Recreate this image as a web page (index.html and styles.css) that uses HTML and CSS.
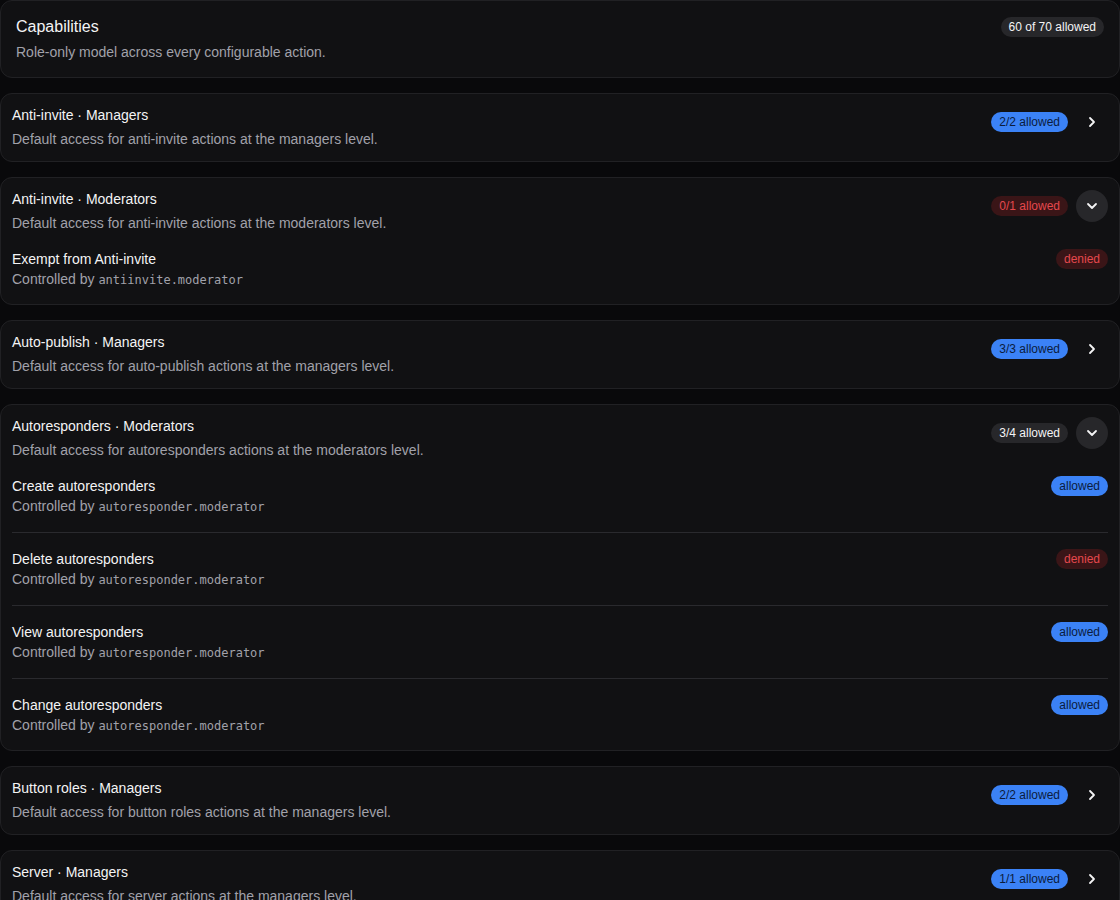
FILE: index.html
```html
<!DOCTYPE html>
<html lang="en">
<head>
<meta charset="utf-8">
<title>Capabilities</title>
<link rel="stylesheet" href="styles.css">
</head>
<body>
<main class="stack">
  <section class="card summary">
    <div class="summary-text">
      <h1 class="summary-title">Capabilities</h1>
      <p class="summary-sub">Role-only model across every configurable action.</p>
    </div>
    <span class="pill pill-neutral">60 of 70 allowed</span>
  </section>

  <section class="card">
    <div class="group-head">
      <div class="group-text">
        <div class="group-title">Anti-invite · Managers</div>
        <div class="group-desc">Default access for anti-invite actions at the managers level.</div>
      </div>
      <div class="group-side">
        <span class="pill pill-allowed">2/2 allowed</span>
        <button class="toggle" aria-label="Expand"><svg viewBox="0 0 16 16" width="16" height="16"><path d="M6 4l4 4-4 4" fill="none" stroke="#f4f4f5" stroke-width="1.8" stroke-linecap="round" stroke-linejoin="round"/></svg></button>
      </div>
    </div>
  </section>

  <section class="card open">
    <div class="group-head">
      <div class="group-text">
        <div class="group-title">Anti-invite · Moderators</div>
        <div class="group-desc">Default access for anti-invite actions at the moderators level.</div>
      </div>
      <div class="group-side">
        <span class="pill pill-denied">0/1 allowed</span>
        <button class="toggle toggle-open" aria-label="Collapse"><svg viewBox="0 0 16 16" width="16" height="16"><path d="M4 6l4 4 4-4" fill="none" stroke="#f4f4f5" stroke-width="1.8" stroke-linecap="round" stroke-linejoin="round"/></svg></button>
      </div>
    </div>
    <ul class="items">
      <li class="item">
        <div class="item-text">
          <div class="item-title">Exempt from Anti-invite</div>
          <div class="item-desc">Controlled by <code class="mono">antiinvite.moderator</code></div>
        </div>
        <span class="pill pill-denied">denied</span>
      </li>
    </ul>
  </section>

  <section class="card">
    <div class="group-head">
      <div class="group-text">
        <div class="group-title">Auto-publish · Managers</div>
        <div class="group-desc">Default access for auto-publish actions at the managers level.</div>
      </div>
      <div class="group-side">
        <span class="pill pill-allowed">3/3 allowed</span>
        <button class="toggle" aria-label="Expand"><svg viewBox="0 0 16 16" width="16" height="16"><path d="M6 4l4 4-4 4" fill="none" stroke="#f4f4f5" stroke-width="1.8" stroke-linecap="round" stroke-linejoin="round"/></svg></button>
      </div>
    </div>
  </section>

  <section class="card open">
    <div class="group-head">
      <div class="group-text">
        <div class="group-title">Autoresponders · Moderators</div>
        <div class="group-desc">Default access for autoresponders actions at the moderators level.</div>
      </div>
      <div class="group-side">
        <span class="pill pill-neutral">3/4 allowed</span>
        <button class="toggle toggle-open" aria-label="Collapse"><svg viewBox="0 0 16 16" width="16" height="16"><path d="M4 6l4 4 4-4" fill="none" stroke="#f4f4f5" stroke-width="1.8" stroke-linecap="round" stroke-linejoin="round"/></svg></button>
      </div>
    </div>
    <ul class="items">
      <li class="item">
        <div class="item-text">
          <div class="item-title">Create autoresponders</div>
          <div class="item-desc">Controlled by <code class="mono">autoresponder.moderator</code></div>
        </div>
        <span class="pill pill-allowed">allowed</span>
      </li>
      <li class="item">
        <div class="item-text">
          <div class="item-title">Delete autoresponders</div>
          <div class="item-desc">Controlled by <code class="mono">autoresponder.moderator</code></div>
        </div>
        <span class="pill pill-denied">denied</span>
      </li>
      <li class="item">
        <div class="item-text">
          <div class="item-title">View autoresponders</div>
          <div class="item-desc">Controlled by <code class="mono">autoresponder.moderator</code></div>
        </div>
        <span class="pill pill-allowed">allowed</span>
      </li>
      <li class="item">
        <div class="item-text">
          <div class="item-title">Change autoresponders</div>
          <div class="item-desc">Controlled by <code class="mono">autoresponder.moderator</code></div>
        </div>
        <span class="pill pill-allowed">allowed</span>
      </li>
    </ul>
  </section>

  <section class="card">
    <div class="group-head">
      <div class="group-text">
        <div class="group-title">Button roles · Managers</div>
        <div class="group-desc">Default access for button roles actions at the managers level.</div>
      </div>
      <div class="group-side">
        <span class="pill pill-allowed">2/2 allowed</span>
        <button class="toggle" aria-label="Expand"><svg viewBox="0 0 16 16" width="16" height="16"><path d="M6 4l4 4-4 4" fill="none" stroke="#f4f4f5" stroke-width="1.8" stroke-linecap="round" stroke-linejoin="round"/></svg></button>
      </div>
    </div>
  </section>

  <section class="card">
    <div class="group-head">
      <div class="group-text">
        <div class="group-title">Server · Managers</div>
        <div class="group-desc">Default access for server actions at the managers level.</div>
      </div>
      <div class="group-side">
        <span class="pill pill-allowed">1/1 allowed</span>
        <button class="toggle" aria-label="Expand"><svg viewBox="0 0 16 16" width="16" height="16"><path d="M6 4l4 4-4 4" fill="none" stroke="#f4f4f5" stroke-width="1.8" stroke-linecap="round" stroke-linejoin="round"/></svg></button>
      </div>
    </div>
  </section>
</main>
</body>
</html>
```

FILE: styles.css
```css
* { box-sizing: border-box; }

html, body {
  margin: 0;
  padding: 0;
  background: #09090b;
  color: #f4f4f5;
  font-family: "Liberation Sans", Arial, sans-serif;
  font-size: 14px;
  line-height: 20px;
}

.stack {
  display: flex;
  flex-direction: column;
  gap: 15px;
}

.card {
  background: #111113;
  border: 1px solid #212124;
  border-radius: 12px;
}

.summary {
  display: flex;
  justify-content: space-between;
  align-items: flex-start;
  padding: 16px 15px 15px;
}

.summary-title {
  margin: 0 0 5px;
  font-size: 16px;
  font-weight: 400;
  line-height: 20px;
  color: #f4f4f5;
}

.summary-sub {
  margin: 0;
  color: #a1a1aa;
  font-size: 14px;
  line-height: 20px;
}

.group-head {
  display: flex;
  justify-content: space-between;
  align-items: flex-start;
  padding: 11px 11px 12px;
}

.open .group-head {
  padding-bottom: 0;
}

.group-title {
  color: #f4f4f5;
  margin-bottom: 4px;
}

.group-desc {
  color: #a1a1aa;
}

.group-side {
  display: flex;
  align-items: center;
  gap: 8px;
  padding-top: 1px;
}

.pill {
  display: inline-flex;
  align-items: center;
  height: 20px;
  padding: 0 8px;
  border-radius: 999px;
  font-size: 12px;
  line-height: 20px;
  white-space: nowrap;
}

.pill-neutral {
  background: #27272a;
  color: #f4f4f5;
}

.pill-allowed {
  background: #3b82f6;
  color: #0b1c3d;
}

.pill-denied {
  background: #3a1517;
  color: #e5484d;
}

.toggle {
  width: 32px;
  height: 32px;
  border: 0;
  border-radius: 50%;
  background: transparent;
  padding: 0;
  display: flex;
  align-items: center;
  justify-content: center;
  cursor: pointer;
}

.toggle-open {
  background: #27272a;
}

.items {
  list-style: none;
  margin: 0;
  padding: 0 11px;
}

.item {
  display: flex;
  justify-content: space-between;
  align-items: flex-start;
  padding: 16px 0 15px;
  border-bottom: 1px solid #2a2a2e;
}

.item:last-child {
  border-bottom: 0;
  padding-bottom: 14px;
}

.item-title {
  color: #f4f4f5;
}

.item-desc {
  color: #a1a1aa;
}

.mono {
  font-family: "DejaVu Sans Mono", "Liberation Mono", monospace;
  font-size: 12px;
  color: #a1a1aa;
}
```
